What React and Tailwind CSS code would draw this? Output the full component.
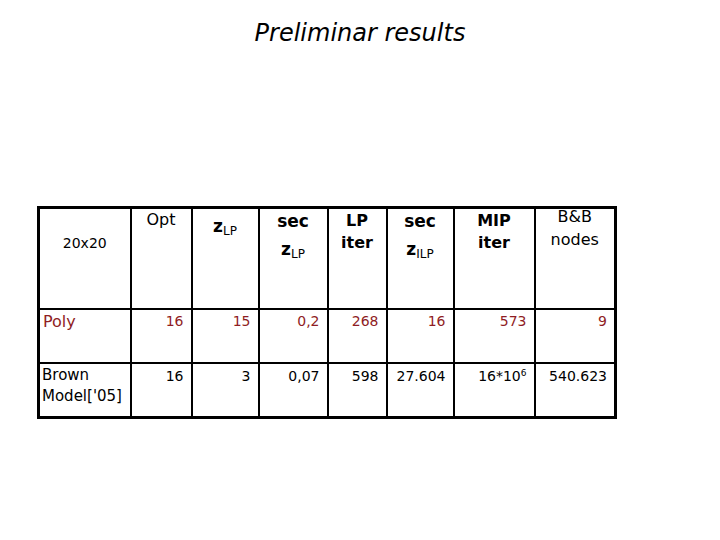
import React from 'react';

const red = 'text-[#8f1d24]';

function Z({ sub }) {
    return (
        <span>
            <span className="font-bold text-[17px]">z</span>
            <sub className="font-normal text-[12px]">{sub}</sub>
        </span>
    );
}

export default function App() {
    const row1 = ['16', '15', '0,2', '268', '16', '573', '9'];
    const row2 = ['16', '3', '0,07', '598', '27.604'];

    return (
        <div className="w-[720px] h-[540px] bg-white text-black flex flex-col" style={{ fontFamily: '"DejaVu Sans", Verdana, sans-serif' }}>
            {/* Title */}
            <h1 className="text-center italic text-[24px] leading-[30px] mt-[18px]">Preliminar results</h1>

            <table className="ml-[37px] mt-[158px] w-[577px] table-fixed border-collapse border-[3px] border-black">
                <colgroup>
                    <col className="w-[92px]" />
                    <col className="w-[61px]" />
                    <col className="w-[67px]" />
                    <col className="w-[69px]" />
                    <col className="w-[59px]" />
                    <col className="w-[67px]" />
                    <col className="w-[81px]" />
                    <col className="w-[81px]" />
                </colgroup>
                <tbody>
                    {/* Header */}
                    <tr className="h-[101px]">
                        <td className="border-2 border-black align-top text-center text-[14px] pt-[24px]">20x20</td>
                        <td className="border-2 border-black align-top text-center text-[16px] leading-[22px] pt-0">Opt</td>
                        <td className="border-2 border-black align-top text-center leading-[22px] pt-[6px]">
                            <Z sub="LP" />
                        </td>
                        <td className="border-2 border-black align-top text-center leading-[22px] pt-[1px]">
                            <div className="font-bold text-[17px]">sec</div>
                            <div className="mt-[6px]"><Z sub="LP" /></div>
                        </td>
                        <td className="border-2 border-black align-top text-center font-bold text-[16px] leading-[22px] pt-[1px]">
                            <div>LP</div>
                            <div>iter</div>
                        </td>
                        <td className="border-2 border-black align-top text-center leading-[22px] pt-[1px]">
                            <div className="font-bold text-[17px]">sec</div>
                            <div className="mt-[6px]"><Z sub="ILP" /></div>
                        </td>
                        <td className="border-2 border-black align-top text-center font-bold text-[16px] leading-[22px] pt-[1px]">
                            <div>MIP</div>
                            <div>iter</div>
                        </td>
                        <td className="border-2 border-black align-top text-center text-[16px] leading-[23px]">
                            <div className="-mt-[4px]">B&amp;B</div>
                            <div>nodes</div>
                        </td>
                    </tr>

                    {/* Poly */}
                    <tr className="h-[54px]">
                        <td className={`border-2 border-black align-top text-[16px] leading-[19px] pl-[3px] pt-[2px] ${red}`}>Poly</td>
                        {row1.map((v, i) => (
                            <td key={i} className={`border-2 border-black align-top text-right text-[14px] leading-[17px] pr-[7px] pt-[3px] ${red}`}>{v}</td>
                        ))}
                    </tr>

                    {/* Brown */}
                    <tr className="h-[55px]">
                        <td className="border-2 border-black align-top text-[15px] leading-[21px] pl-[2px] pt-[1px]">
                            <div>Brown</div>
                            <div>Model['05]</div>
                        </td>
                        {row2.map((v, i) => (
                            <td key={i} className="border-2 border-black align-top text-right text-[14px] leading-[17px] pr-[7px] pt-[4px]">{v}</td>
                        ))}
                        <td className="border-2 border-black align-top text-right text-[14px] leading-[17px] pr-[7px] pt-[4px]">
                            16*10<sup className="text-[9px]">6</sup>
                        </td>
                        <td className="border-2 border-black align-top text-right text-[14px] leading-[17px] pr-[7px] pt-[4px]">540.623</td>
                    </tr>
                </tbody>
            </table>
        </div>
    );
}
